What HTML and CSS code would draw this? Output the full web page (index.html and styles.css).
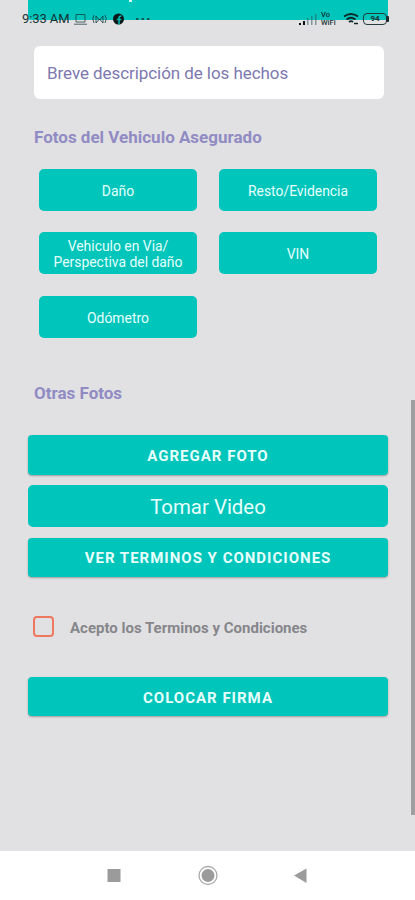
FILE: index.html
```html
<!DOCTYPE html>
<html lang="es">
<head>
<meta charset="utf-8">
<meta name="viewport" content="width=device-width, initial-scale=1">
<title>Fotos del Vehiculo</title>
<link rel="stylesheet" href="styles.css">
</head>
<body>
<div class="status">
  <span class="clock">9:33 AM</span>
  <svg class="notifications" width="80" height="16" viewBox="0 0 80 16" fill="none" stroke="#173b3c">
    <path d="M3 3.500H12V11H3zM1 13.200H14" opacity=".75"/>
    <path d="M21 4Q18.500 8 21 12M32 4Q34.500 8 32 12M23 12V5L26.500 9L30 5V12M23 12L26.500 8L30 12" opacity=".8"/>
    <circle cx="45.500" cy="8" r="5.500" fill="#0a1718" stroke="none"/>
    <path d="M46 13.500V7Q46 5 48.500 5M43.800 8.500H48.300" stroke="#00b8b1" stroke-width="1.600"/>
    <path d="M63 8h2.500M68.500 8h2.500M74 8h2.500" stroke-width="1.500"/>
  </svg>
  <svg class="signal" width="20" height="14" viewBox="0 0 20 14">
    <path d="M1 11h2v2H1zM5 9h2v4H5z" fill="#071112"/>
    <path d="M9 6h1.500v7H9zM13 4h1.500v9H13zM17 2h1.500v11H17z" fill="#315b5c" opacity=".55"/>
  </svg>
  <span class="carrier"><span>Vo</span><span>WiFi</span></span>
  <svg class="wifi" width="16" height="13" viewBox="0 0 16 13" fill="none" stroke="#102627" stroke-width="1.800">
    <path d="M1 4.500Q8-.5 15 4.500M3.500 7.500Q8 4 12.500 7.500M6 10Q8 8.300 10 10"/>
    <path d="M11 11.500h4" stroke-width="1.500"/>
  </svg>
  <span class="battery">94</span>
</div>

<main class="screen">
  <header class="topbar"><div class="topbar-mark"></div></header>
  <div class="description"><span class="t-desc">Breve descripción de los hechos</span></div>
  <h2 class="heading">Fotos del Vehiculo Asegurado</h2>
  <div class="photos">
    <button class="photo">Daño</button>
    <button class="photo">Resto/Evidencia</button>
    <button class="photo">Vehiculo en Via/<br>Perspectiva del daño</button>
    <button class="photo">VIN</button>
    <button class="photo">Odómetro</button>
  </div>
  <h2 class="heading others">Otras Fotos</h2>
  <div class="actions">
    <button class="action">AGREGAR FOTO</button>
    <button class="action video">Tomar Video</button>
    <button class="action terms">VER TERMINOS Y CONDICIONES</button>
  </div>
  <label class="accept"><span class="box"></span><span class="accept-text">Acepto los Terminos y Condiciones</span></label>
  <button class="action sign">COLOCAR FIRMA</button>
  <div class="scrollbar"></div>
</main>

<nav class="navbar">
  <svg width="415" height="49" viewBox="0 0 415 49">
    <rect x="107.500" y="18" width="13" height="13" fill="#9b9b9b"/>
    <circle cx="208" cy="24.500" r="9" fill="none" stroke="#aaa" stroke-width="1.300"/>
    <circle cx="208" cy="24.500" r="6.500" fill="#9b9b9b"/>
    <path d="M306.500 17.500V32L294 24.500z" fill="#9b9b9b"/>
  </svg>
</nav>
</body>
</html>
```
FILE: styles.css
```css
* { box-sizing: border-box; }

body {
  margin: 0;
  width: 415px;
  height: 900px;
  display: flex;
  flex-direction: column;
  position: relative;
  overflow: hidden;
  background: #e1e1e3;
  font-family: Roboto, "Liberation Sans", sans-serif;
}

button { border: 0; margin: 0; padding: 0; font: inherit; color: #e6fffc; }

.status {
  position: absolute;
  z-index: 2;
  top: 10px;
  left: 22px;
  width: 369px;
  height: 17px;
  display: flex;
  align-items: center;
  color: #173334;
}
.clock { width: 50px; font-size: 13px; letter-spacing: -.1px; white-space: nowrap; }
.notifications { margin-left: 1px; }
.signal { margin-left: 145px; }
.carrier {
  width: 20px;
  margin-left: 3px;
  display: flex;
  flex-direction: column;
  font-size: 7.500px;
  font-weight: 500;
  line-height: 8px;
}
.wifi { margin-left: 2px; }
.battery {
  position: relative;
  width: 24px;
  height: 12px;
  margin-left: 4px;
  border: 1.500px solid #263b3c;
  border-radius: 4px;
  font-size: 8px;
  line-height: 10px;
  font-weight: 700;
  text-align: center;
}
.battery::after {
  content: "";
  position: absolute;
  right: -3px;
  top: 2px;
  width: 3px;
  height: 6px;
  background: #172b2c;
  border-radius: 1px;
}

.screen { position: relative; height: 851px; padding: 0 27px 0 28px; }
.topbar {
  height: 20px;
  padding-left: 101px;
  background: #00c5bb;
  border-radius: 0 0 0 3px;
}
.topbar-mark { width: 3px; height: 2px; background: #d5f8f5; }

.description {
  height: 53px;
  margin: 26px 4px 0 6px;
  padding-left: 13px;
  display: flex;
  align-items: center;
  background: #fff;
  border-radius: 6px;
  color: #7d78af;
  font-size: 17px;
}
.t-desc { letter-spacing: -.07px; padding-top: 1px; }

.heading {
  margin: 28px 0 0 6px;
  height: 20px;
  line-height: 20px;
  font-size: 17px;
  font-weight: 700;
  color: #918bc3;
  white-space: nowrap;
}

.photos {
  margin: 22px 10px 0 11px;
  display: grid;
  grid-template-columns: 158px 158px;
  grid-auto-rows: 42px;
  column-gap: 22px;
  row-gap: 21.400px;
}
.photo { padding-top: 2px; background: #00c5bb; border-radius: 5px; font-size: 13.900px; line-height: 16px; }

.others { margin-top: 45px; }

.actions { margin-top: 32px; display: flex; flex-direction: column; gap: 10.500px; }
.action {
  width: 360px;
  height: 40px;
  flex: none;
  padding-top: 2px;
  background: #00c5bb;
  border-radius: 4px;
  box-shadow: 0 1px 2px rgba(0, 0, 0, .3);
  font-size: 15px;
  font-weight: 700;
  letter-spacing: 1px;
}
.video { height: 42px; font-size: 20.400px; font-weight: 400; letter-spacing: 0; box-shadow: none; border-radius: 5px; }
.terms { height: 39px; }

.accept {
  display: flex;
  align-items: center;
  height: 22px;
  margin: 39px 0 0 5px;
  font-size: 15px;
  font-weight: 700;
  color: #86868b;
}
.accept-text { padding-top: 3px; }
.box { width: 21px; height: 21px; margin-right: 16px; border: 2px solid #ef7960; border-radius: 4px; }

.sign { display: block; height: 39.500px; margin-top: 39px; }

.scrollbar { position: absolute; right: 0; top: 400px; width: 4px; height: 415px; background: #9e9e9e; }

.navbar { height: 49px; background: #fff; }
.navbar svg { display: block; }
```
